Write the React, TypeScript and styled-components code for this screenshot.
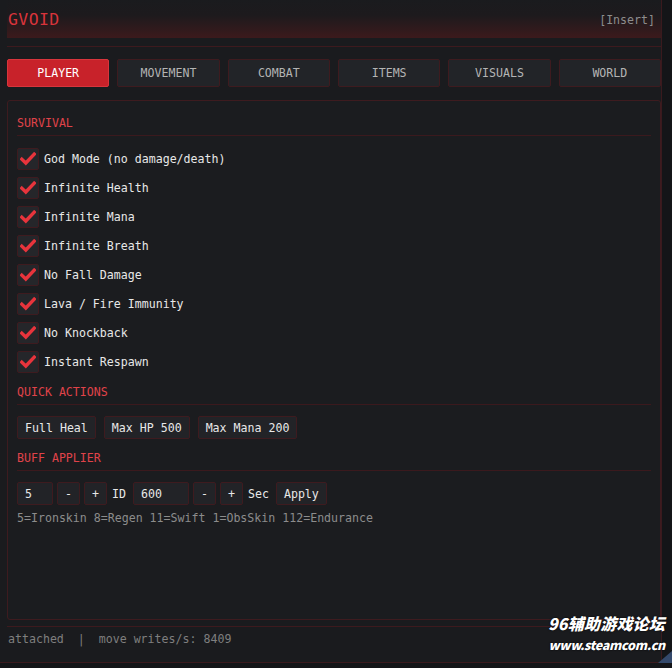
import styled, { createGlobalStyle } from "styled-components";

const GlobalStyle = createGlobalStyle`
  html, body {
    margin: 0;
    padding: 0;
    background: #141518;
  }
  body {
    font-family: "DejaVu Sans Mono", "Liberation Mono", monospace;
    font-size: 11.6px;
    color: #e6e6e6;
  }
`;

const MONO = `"DejaVu Sans Mono", "Liberation Mono", monospace`;
const EDGE = "#3e1b1f";

const Window = styled.div`
  position: relative;
  width: 662px;
  height: 663px;
  box-sizing: border-box;
  background: #1a1b1e;
  border-right: 1px solid #3a1a1e;
  border-bottom: 1px solid #3a1a1e;
  padding: 0 0 11px 7px;
  display: flex;
  flex-direction: column;
  font-family: ${MONO};
`;

const Header = styled.div`
  height: 38px;
  display: flex;
  align-items: center;
  justify-content: space-between;
  padding: 0 6px 0 1px;
  background: linear-gradient(to bottom, #1a1b1e 0%, #1d1a1d 40%, #3c1a1c 100%);
`;

const Title = styled.div`
  color: #d8343b;
  font-size: 16.5px;
  letter-spacing: 0.4px;
`;

const HotKey = styled.div`
  color: #8d8d8d;
  margin-top: 2px;
`;

const Rule = styled.div<{ $top: number }>`
  height: 1px;
  background: #3d1a1e;
  margin-top: ${(p) => p.$top}px;
`;

const Tabs = styled.div`
  display: grid;
  grid-template-columns: repeat(6, 1fr);
  gap: 8px;
  margin-top: 12px;
`;

const Tab = styled.div<{ $active?: boolean }>`
  height: 28px;
  box-sizing: border-box;
  display: flex;
  align-items: center;
  justify-content: center;
  border-radius: 2px;
  border: 1px solid ${(p) => (p.$active ? "#d8353c" : EDGE)};
  background: ${(p) => (p.$active ? "#c8222a" : "#222428")};
  color: ${(p) => (p.$active ? "#ffffff" : "#b4b4b4")};
`;

const Panel = styled.div`
  flex: 1;
  margin-top: 13px;
  border: 1px solid ${EDGE};
  border-radius: 3px;
  background: #1b1c1f;
  padding: 15px 9px 0 9px;
  display: flex;
  flex-direction: column;
`;

const SectionTitle = styled.div<{ $first?: boolean }>`
  color: #e0434a;
  line-height: 14px;
  margin-top: ${(p) => (p.$first ? 0 : 12)}px;
`;

const SectionRule = styled.div`
  height: 1px;
  background: #3b191d;
  margin: 5px 0 11px 0;
`;

const CheckList = styled.div`
  display: flex;
  flex-direction: column;
  gap: 7px;
  margin-top: 1px;
`;

const CheckRow = styled.label`
  display: flex;
  align-items: center;
  gap: 5px;
  height: 22px;
  color: #e8e8e8;
`;

const Box = styled.div`
  width: 22px;
  height: 22px;
  box-sizing: border-box;
  border: 1px solid ${EDGE};
  border-radius: 2px;
  background: #25262a;
  display: flex;
  align-items: center;
  justify-content: center;
`;

const Row = styled.div<{ $gap: number }>`
  display: flex;
  align-items: center;
  gap: ${(p) => p.$gap}px;
`;

const Button = styled.div<{ $square?: boolean }>`
  height: 23px;
  box-sizing: border-box;
  display: flex;
  align-items: center;
  justify-content: center;
  padding: ${(p) => (p.$square ? "0" : "0 7px")};
  width: ${(p) => (p.$square ? "23px" : "auto")};
  border: 1px solid ${EDGE};
  border-radius: 2px;
  background: #222327;
  color: #e8e8e8;
`;

const Field = styled.div<{ $w: number }>`
  width: ${(p) => p.$w}px;
  height: 23px;
  box-sizing: border-box;
  display: flex;
  align-items: center;
  padding: 0 7px;
  border: 1px solid ${EDGE};
  border-radius: 2px;
  background: #222327;
  color: #e8e8e8;
`;

const Label = styled.span`
  margin: 0 3px 0 1px;
  color: #e8e8e8;
`;

const Hint = styled.div`
  margin-top: 6px;
  line-height: 14px;
  color: #8c8c8c;
`;

const Footer = styled.div`
  height: 24px;
  display: flex;
  align-items: center;
  padding-left: 1px;
  color: #7f7f7f;
  white-space: pre;
`;

const Watermark = styled.div`
  position: absolute;
  right: -4px;
  bottom: 9px;
  display: flex;
  flex-direction: column;
  align-items: flex-end;
  gap: 3px;
  font-family: "Noto Sans CJK SC", "Noto Sans", sans-serif;
  font-weight: 900;
  font-style: italic;
  color: #ffffff;
  text-shadow: 0 0 2px #000;
`;

const MarkTop = styled.div`
  font-size: 16px;
  line-height: 20px;
  letter-spacing: 0.2px;
`;

const MarkBottom = styled.div`
  font-size: 12.5px;
  line-height: 17px;
  letter-spacing: -0.3px;
`;

const Grip = styled.div`
  position: absolute;
  right: -11px;
  bottom: -1px;
  width: 14px;
  height: 12px;
  background: #34496b;
  clip-path: polygon(100% 0, 100% 100%, 0 100%);
`;

const Check = () => (
  <svg width="16" height="14" viewBox="0 0 16 14">
    <polyline
      points="1.8,7.2 5.8,11 14.2,2.2"
      fill="none"
      stroke="#e8343c"
      strokeWidth="3.4"
      strokeLinecap="square"
      strokeLinejoin="miter"
    />
  </svg>
);

const tabs = ["PLAYER", "MOVEMENT", "COMBAT", "ITEMS", "VISUALS", "WORLD"];

const survival = [
  "God Mode (no damage/death)",
  "Infinite Health",
  "Infinite Mana",
  "Infinite Breath",
  "No Fall Damage",
  "Lava / Fire Immunity",
  "No Knockback",
  "Instant Respawn",
];

export default function App() {
  return (
    <>
      <GlobalStyle />
      <Window>
        <Header>
          <Title>GVOID</Title>
          <HotKey>[Insert]</HotKey>
        </Header>
        <Rule $top={8} />
        <Tabs>
          {tabs.map((t, i) => (
            <Tab key={t} $active={i === 0}>
              {t}
            </Tab>
          ))}
        </Tabs>
        <Panel>
          <SectionTitle $first>SURVIVAL</SectionTitle>
          <SectionRule />
          <CheckList>
            {survival.map((s) => (
              <CheckRow key={s}>
                <Box>
                  <Check />
                </Box>
                {s}
              </CheckRow>
            ))}
          </CheckList>

          <SectionTitle>QUICK ACTIONS</SectionTitle>
          <SectionRule />
          <Row $gap={8}>
            <Button>Full Heal</Button>
            <Button>Max HP 500</Button>
            <Button>Max Mana 200</Button>
          </Row>

          <SectionTitle>BUFF APPLIER</SectionTitle>
          <SectionRule />
          <Row $gap={4}>
            <Field $w={36}>5</Field>
            <Button $square>-</Button>
            <Button $square>+</Button>
            <Label>ID</Label>
            <Field $w={56}>600</Field>
            <Button $square>-</Button>
            <Button $square>+</Button>
            <Label>Sec</Label>
            <Button>Apply</Button>
          </Row>
          <Hint>5=Ironskin 8=Regen 11=Swift 1=ObsSkin 112=Endurance</Hint>
        </Panel>
        <Rule $top={6} />
        <Footer>{"attached  |  move writes/s: 8409"}</Footer>
        <Watermark>
          <MarkTop>96辅助游戏论坛</MarkTop>
          <MarkBottom>www.steamcom.cn</MarkBottom>
        </Watermark>
        <Grip />
      </Window>
    </>
  );
}
